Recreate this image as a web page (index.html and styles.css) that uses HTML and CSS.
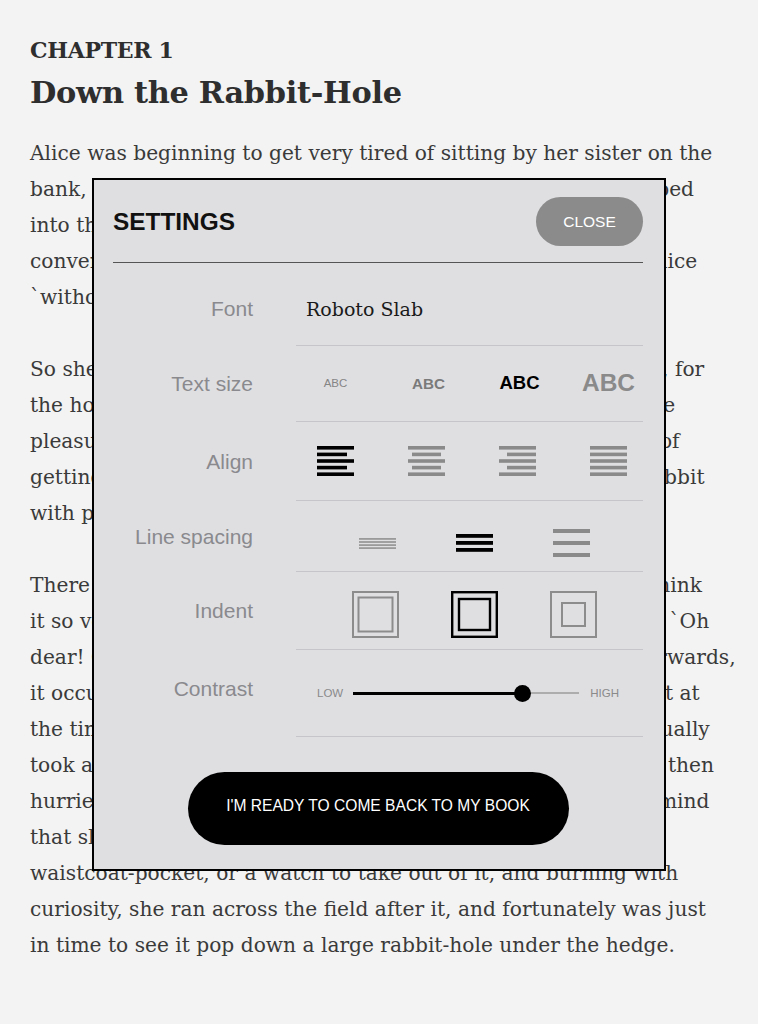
FILE: index.html
```html
<!DOCTYPE html>
<html lang="en">
<head>
<meta charset="utf-8">
<title>Down the Rabbit-Hole</title>
<link rel="stylesheet" href="styles.css">
</head>
<body>
<main class="page">
  <p class="chapter">CHAPTER 1</p>
  <h1 class="title">Down the Rabbit-Hole</h1>
  <p class="para">Alice was beginning to get very tired of sitting by her sister on the<br>bank, and of having nothing to do: once or twice she had peeped<br>into the book her sister was reading, but it had no pictures or<br>conversations in it, `and what is the use of a book,' thought Alice<br>`without pictures or conversation?'</p>
  <p class="para">So she was considering in her own mind (as well as she could, for<br>the hot day made her feel very sleepy and stupid), whether the<br>pleasure of making a daisy-chain would be worth the trouble of<br>getting up and picking the daisies, when suddenly a White Rabbit<br>with pink eyes ran close by her.</p>
  <p class="para">There was nothing so very remarkable in that; nor did Alice think<br>it so very much out of the way to hear the Rabbit say to itself, `Oh<br>dear! Oh dear! I shall be late!' (when she thought it over afterwards,<br>it occurred to her that she ought to have wondered at this, but at<br>the time it all seemed quite natural); but when the Rabbit actually<br>took a watch out of its waistcoat-pocket, and looked at it, and then<br>hurried on, Alice started to her feet, for it flashed across her mind<br>that she had never before seen a rabbit with either a<br>waistcoat-pocket, or a watch to take out of it, and burning with<br>curiosity, she ran across the field after it, and fortunately was just<br>in time to see it pop down a large rabbit-hole under the hedge.</p>
</main>

<section class="modal" aria-label="Settings">
  <header class="modal-head">
    <h2 class="modal-title">SETTINGS</h2>
    <button class="close-btn" type="button">CLOSE</button>
  </header>

  <div class="row row-font">
    <span class="label">Font</span>
    <div class="cell"><span class="font-name">Roboto Slab</span></div>
  </div>

  <div class="row row-size">
    <span class="label">Text size</span>
    <div class="cell">
      <div class="opts four">
        <span class="abc abc-1">ABC</span>
        <span class="abc abc-2">ABC</span>
        <span class="abc abc-3">ABC</span>
        <span class="abc abc-4">ABC</span>
      </div>
    </div>
  </div>

  <div class="row row-align">
    <span class="label">Align</span>
    <div class="cell">
      <div class="opts four">
        <svg class="ico on" width="37" height="30" viewBox="0 0 37 30"><rect x="0" y="0" width="37" height="3.6"/><rect x="0" y="6.6" width="30" height="3.6"/><rect x="0" y="13.2" width="37" height="3.6"/><rect x="0" y="19.8" width="30" height="3.6"/><rect x="0" y="26.4" width="37" height="3.6"/></svg>
        <svg class="ico" width="37" height="30" viewBox="0 0 37 30"><rect x="0" y="0" width="37" height="3.6"/><rect x="4" y="6.6" width="29" height="3.6"/><rect x="0" y="13.2" width="37" height="3.6"/><rect x="4" y="19.8" width="29" height="3.6"/><rect x="0" y="26.4" width="37" height="3.6"/></svg>
        <svg class="ico" width="37" height="30" viewBox="0 0 37 30"><rect x="0" y="0" width="37" height="3.6"/><rect x="8" y="6.6" width="29" height="3.6"/><rect x="0" y="13.2" width="37" height="3.6"/><rect x="8" y="19.8" width="29" height="3.6"/><rect x="0" y="26.4" width="37" height="3.6"/></svg>
        <svg class="ico" width="37" height="30" viewBox="0 0 37 30"><rect x="0" y="0" width="37" height="3.6"/><rect x="0" y="6.6" width="37" height="3.6"/><rect x="0" y="13.2" width="37" height="3.6"/><rect x="0" y="19.8" width="37" height="3.6"/><rect x="0" y="26.4" width="37" height="3.6"/></svg>
      </div>
    </div>
  </div>

  <div class="row row-spacing">
    <span class="label">Line spacing</span>
    <div class="cell">
      <div class="opts three">
        <svg class="ico light" width="37" height="11" viewBox="0 0 37 11"><rect x="0" y="0" width="37" height="1.8"/><rect x="0" y="3.1" width="37" height="1.8"/><rect x="0" y="6.2" width="37" height="1.8"/><rect x="0" y="9.2" width="37" height="1.8"/></svg>
        <svg class="ico on" width="37" height="18" viewBox="0 0 37 18"><rect x="0" y="0" width="37" height="3.8"/><rect x="0" y="7" width="37" height="3.8"/><rect x="0" y="14" width="37" height="3.8"/></svg>
        <svg class="ico" width="37" height="28" viewBox="0 0 37 28"><rect x="0" y="0" width="37" height="4"/><rect x="0" y="12" width="37" height="4"/><rect x="0" y="24" width="37" height="4"/></svg>
      </div>
    </div>
  </div>

  <div class="row row-indent">
    <span class="label">Indent</span>
    <div class="cell">
      <div class="opts three">
        <svg class="sq" width="47" height="47" viewBox="0 0 47 47"><rect x="1" y="1" width="45" height="45"/><rect x="6.5" y="6.5" width="34" height="34"/></svg>
        <svg class="sq on" width="47" height="47" viewBox="0 0 47 47"><rect x="1.2" y="1.2" width="44.6" height="44.6"/><rect x="8" y="8" width="31" height="31"/></svg>
        <svg class="sq" width="47" height="47" viewBox="0 0 47 47"><rect x="1" y="1" width="45" height="45"/><rect x="12" y="12" width="23" height="23"/></svg>
      </div>
    </div>
  </div>

  <div class="row row-contrast">
    <span class="label">Contrast</span>
    <div class="cell">
      <div class="slider">
        <span class="tick">LOW</span>
        <div class="track"><div class="fill" style="width:75%"></div><span class="knob"></span></div>
        <span class="tick">HIGH</span>
      </div>
    </div>
  </div>

  <div class="modal-foot">
    <button class="ready-btn" type="button">I'M READY TO COME BACK TO MY BOOK</button>
  </div>
</section>
</body>
</html>
```

FILE: styles.css
```css
* { box-sizing: border-box; }

html, body {
  margin: 0;
  padding: 0;
}

body {
  background: #f3f3f3;
  color: #333;
  font-family: "DejaVu Serif", "Liberation Serif", serif;
  width: 758px;
  height: 1024px;
  overflow: hidden;
  position: relative;
}

.page {
  padding: 0 30px;
}

.chapter {
  margin: 35px 0 0;
  font-size: 22px;
  line-height: 30px;
  font-weight: bold;
  color: #2e2e2e;
  letter-spacing: -0.3px;
}

.title {
  margin: 5px 0 0;
  font-size: 30.4px;
  line-height: 44px;
  font-weight: bold;
  color: #2e2e2e;
  letter-spacing: -0.3px;
}

.para {
  margin: 21px 0 36px;
  font-size: 20.2px;
  line-height: 36px;
  color: #3a3a3a;
  white-space: nowrap;
}
.para + .para { margin-top: 0; }

/* ---------- Settings modal ---------- */
.modal {
  position: absolute;
  left: 92px;
  top: 178px;
  width: 574px;
  border: 2px solid #000;
  background: #dfdfe2;
  padding: 17px 21px 24px 19px;
  font-family: "Liberation Sans", Arial, sans-serif;
}

.modal-head {
  display: flex;
  justify-content: space-between;
  align-items: center;
  padding-bottom: 16px;
  border-bottom: 1px solid #555;
}

.modal-title {
  margin: 0;
  font-size: 24.4px;
  font-weight: bold;
  color: #111;
}

.close-btn {
  width: 107px;
  height: 49px;
  border: 0;
  border-radius: 25px;
  background: #8b8b8b;
  color: #fff;
  font-family: inherit;
  font-size: 15.5px;
  padding: 0;
}

.row {
  display: grid;
  grid-template-columns: 140px 347px;
  column-gap: 43px;
}

.label {
  align-self: center;
  text-align: right;
  font-size: 21px;
  color: #8a8a8e;
}

.cell {
  border-bottom: 1px solid #c5c5ca;
  display: flex;
  align-items: center;
}

.row-font .cell { height: 83px; padding-top: 9px; }
.row-font .label { padding-top: 9px; }
.row-size .cell { height: 76px; }
.row-align .cell { height: 79px; }
.row-spacing .cell { height: 71px; padding-top: 14px; }
.row-indent .cell { height: 78px; padding-top: 7px; }
.row-contrast .cell { height: 87px; }
.row-contrast .label { padding-bottom: 9px; }

.font-name {
  padding-left: 10px;
  font-family: "DejaVu Serif", serif;
  font-size: 19px;
  color: #1a1a1a;
}

.opts {
  width: 100%;
  display: flex;
  justify-content: center;
  align-items: center;
  padding-left: 5px;
}
.opts > * { flex: none; }
.opts.four > * { margin: 0 27px; }
.opts.four > .abc { width: 91px; margin: 0; text-align: center; }
.opts.three { padding-left: 9px; }
.opts.three > * { margin: 0 30px; }

.abc { font-weight: bold; line-height: 1; }
.abc-1 { font-size: 11.5px; font-weight: normal; color: #858585; }
.abc-2 { font-size: 15.2px; color: #7a7a7a; }
.abc-3 { font-size: 18.5px; color: #000; }
.abc-4 { font-size: 24.5px; color: #8a8a8a; }
.abc-2, .abc-3 { position: relative; left: 2px; }

.ico { fill: #8a8a8a; display: block; }
.ico.light { fill: #9a9a9a; }
.ico.on { fill: #000; }

.sq { display: block; fill: none; stroke: #8c8c8c; stroke-width: 2; }
.sq.on { stroke: #000; stroke-width: 2.4; }
.opts.three > .sq { margin: 0 26px; }

.slider {
  width: 100%;
  display: flex;
  align-items: center;
  padding-left: 21px;
}

.tick {
  font-size: 11.5px;
  color: #8a8a8a;
}

.track {
  position: relative;
  width: 226px;
  height: 2.5px;
  margin: 0 11px 0 10px;
  background: #adadad;
}

.fill {
  height: 3px;
  margin-top: -0.25px;
  background: #000;
}

.knob {
  position: absolute;
  left: 75%;
  top: 50%;
  width: 17px;
  height: 17px;
  margin: -8.5px 0 0 -8.5px;
  border-radius: 50%;
  background: #000;
}

.modal-foot {
  display: flex;
  justify-content: center;
  padding-top: 35px;
}

.ready-btn {
  width: 381px;
  height: 73px;
  border: 0;
  border-radius: 37px;
  background: #000;
  color: #fff;
  font-family: inherit;
  font-size: 15.6px;
  padding: 0 0 5px;
}
```
